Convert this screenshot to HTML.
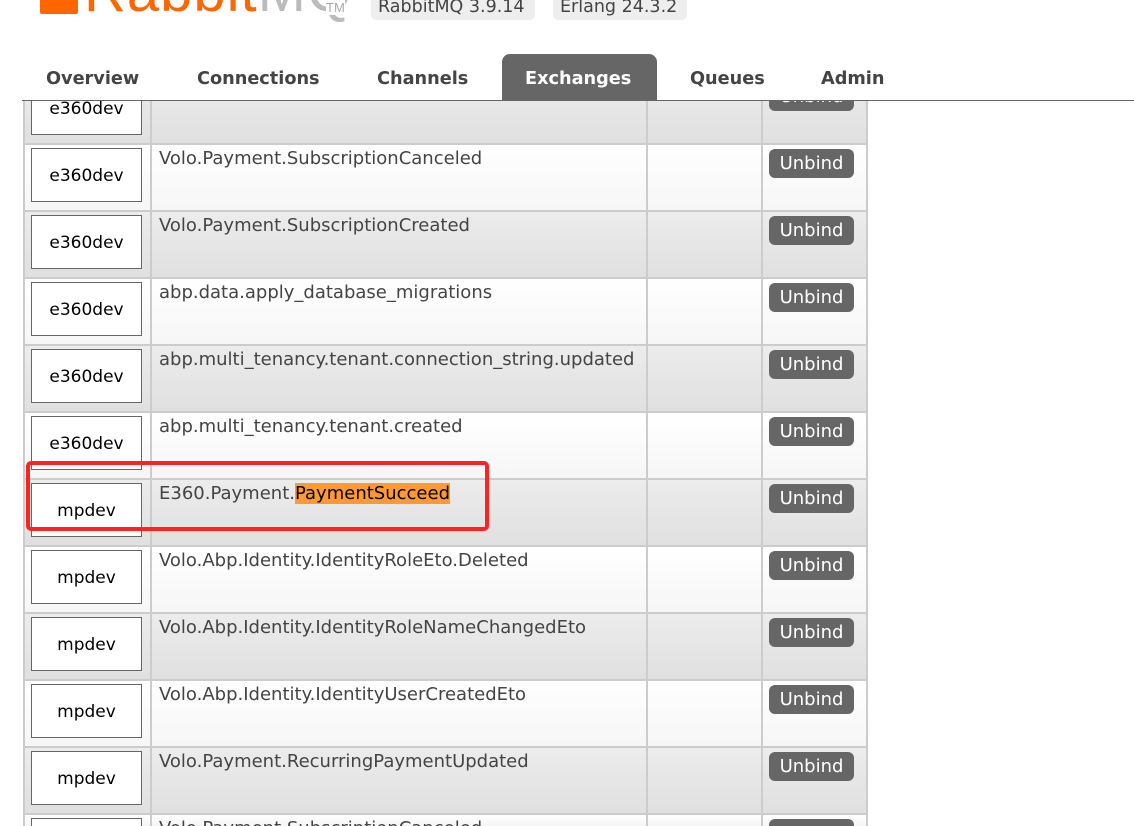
<!DOCTYPE html>
<html><head><meta charset="utf-8"><style>
*{margin:0;padding:0;box-sizing:border-box}
html,body{width:1134px;height:826px;overflow:hidden}
body{background:#fff;font-family:"DejaVu Sans","Liberation Sans",sans-serif;position:relative}
.wrap{position:absolute;left:0;top:0;width:1134px;height:826px;overflow:hidden}
.abs{position:absolute}
.hdr{position:absolute;left:0;top:0;width:1134px;height:101px;background:#fff;z-index:5;overflow:hidden}
.logo{position:absolute;left:84px;top:-37px;font-family:"Liberation Sans",sans-serif;font-size:58px;line-height:58px;letter-spacing:1px;white-space:nowrap}
.pill{position:absolute;top:-6px;height:26px;background:#eee;border-radius:5px;color:#444;font-size:17.5px;line-height:26px;padding:0 7px;white-space:nowrap}
.tab{position:absolute;top:69px;font-size:17.7px;font-weight:bold;color:#444;white-space:nowrap}
.row{position:absolute;left:23px;width:845px;height:67px;border-top:2px solid #ccc;border-left:2px solid #ccc;border-right:2px solid #ccc}
.g{background:linear-gradient(#ececec,#e0e0e0)}
.l{background:linear-gradient(#fff,#f6f6f6)}
.c1,.c2,.c3{position:absolute;top:0;height:100%;border-right:2px solid #ccc}
.c1{left:0;width:127px}.c2{left:127px;width:496px}.c3{left:623px;width:115px}
.nm{position:absolute;left:6px;top:3px;width:111px;height:54px;background:#fff;border:1px solid #666;font-size:17px;color:#000;text-align:center;line-height:54px}
.rk{position:absolute;left:134px;top:3px;font-size:18px;color:#444;white-space:nowrap}
.btn{position:absolute;left:744px;top:4px;width:85px;height:29px;background:#666;border-radius:6px;color:#fff;font-size:18px;line-height:29px;text-align:center}
</style></head><body><div class="wrap">
<div class="hdr">
<div class="abs" style="left:40px;top:0;width:38px;height:14px;background:#f60;border-radius:0 0 2px 2px"></div>
<div class="logo"><span style="color:#f60">Rabbit</span><span style="color:#bbb">MQ</span></div>
<div class="abs" style="left:326px;top:0;font-size:13px;color:#aaa;font-family:'Liberation Sans',sans-serif;background:#fff">TM</div>
<div class="pill" style="left:371px;width:164px">RabbitMQ 3.9.14</div>
<div class="pill" style="left:553px;width:134px">Erlang 24.3.2</div>
<div class="abs" style="left:502px;top:54px;width:155px;height:47px;background:#666;border-radius:8px 8px 0 0"></div>
<div class="tab" style="left:46px">Overview</div>
<div class="tab" style="left:197px">Connections</div>
<div class="tab" style="left:377px">Channels</div>
<div class="tab" style="left:525px;color:#fff">Exchanges</div>
<div class="tab" style="left:690px">Queues</div>
<div class="tab" style="left:821px">Admin</div>
<div class="abs" style="left:22px;top:100px;width:1112px;height:1px;background:#666"></div>
</div>

<div class="row g" style="top:76px"><div class="c1"></div><div class="c2"></div><div class="c3"></div><div class="nm">e360dev</div><div class="btn">Unbind</div></div>
<div class="row l" style="top:143px"><div class="c1"></div><div class="c2"></div><div class="c3"></div><div class="nm">e360dev</div><div class="rk">Volo.Payment.SubscriptionCanceled</div><div class="btn">Unbind</div></div>
<div class="row g" style="top:210px"><div class="c1"></div><div class="c2"></div><div class="c3"></div><div class="nm">e360dev</div><div class="rk">Volo.Payment.SubscriptionCreated</div><div class="btn">Unbind</div></div>
<div class="row l" style="top:277px"><div class="c1"></div><div class="c2"></div><div class="c3"></div><div class="nm">e360dev</div><div class="rk">abp.data.apply_database_migrations</div><div class="btn">Unbind</div></div>
<div class="row g" style="top:344px"><div class="c1"></div><div class="c2"></div><div class="c3"></div><div class="nm">e360dev</div><div class="rk">abp.multi_tenancy.tenant.connection_string.updated</div><div class="btn">Unbind</div></div>
<div class="row l" style="top:411px"><div class="c1"></div><div class="c2"></div><div class="c3"></div><div class="nm">e360dev</div><div class="rk">abp.multi_tenancy.tenant.created</div><div class="btn">Unbind</div></div>
<div class="row g" style="top:478px"><div class="c1"></div><div class="c2"></div><div class="c3"></div><div class="nm">mpdev</div><div class="rk">E360.Payment.<span style="background:#f93;color:#000">PaymentSucceed</span></div><div class="btn">Unbind</div></div>
<div class="row l" style="top:545px"><div class="c1"></div><div class="c2"></div><div class="c3"></div><div class="nm">mpdev</div><div class="rk">Volo.Abp.Identity.IdentityRoleEto.Deleted</div><div class="btn">Unbind</div></div>
<div class="row g" style="top:612px"><div class="c1"></div><div class="c2"></div><div class="c3"></div><div class="nm">mpdev</div><div class="rk">Volo.Abp.Identity.IdentityRoleNameChangedEto</div><div class="btn">Unbind</div></div>
<div class="row l" style="top:679px"><div class="c1"></div><div class="c2"></div><div class="c3"></div><div class="nm">mpdev</div><div class="rk">Volo.Abp.Identity.IdentityUserCreatedEto</div><div class="btn">Unbind</div></div>
<div class="row g" style="top:746px"><div class="c1"></div><div class="c2"></div><div class="c3"></div><div class="nm">mpdev</div><div class="rk">Volo.Payment.RecurringPaymentUpdated</div><div class="btn">Unbind</div></div>
<div class="row l" style="top:813px;height:13px"><div class="c1"></div><div class="c2"></div><div class="c3"></div><div class="nm" style="height:10px;border-bottom:0">&nbsp;</div><div class="rk" style="height:11px;overflow:hidden">Volo.Payment.SubscriptionCanceled</div><div class="btn" style="height:9px;border-radius:6px 6px 0 0"></div></div>

<div class="abs" style="left:26px;top:461px;width:463px;height:70px;border:4px solid #f22;border-radius:5px;z-index:6"></div>
</div></body></html>
